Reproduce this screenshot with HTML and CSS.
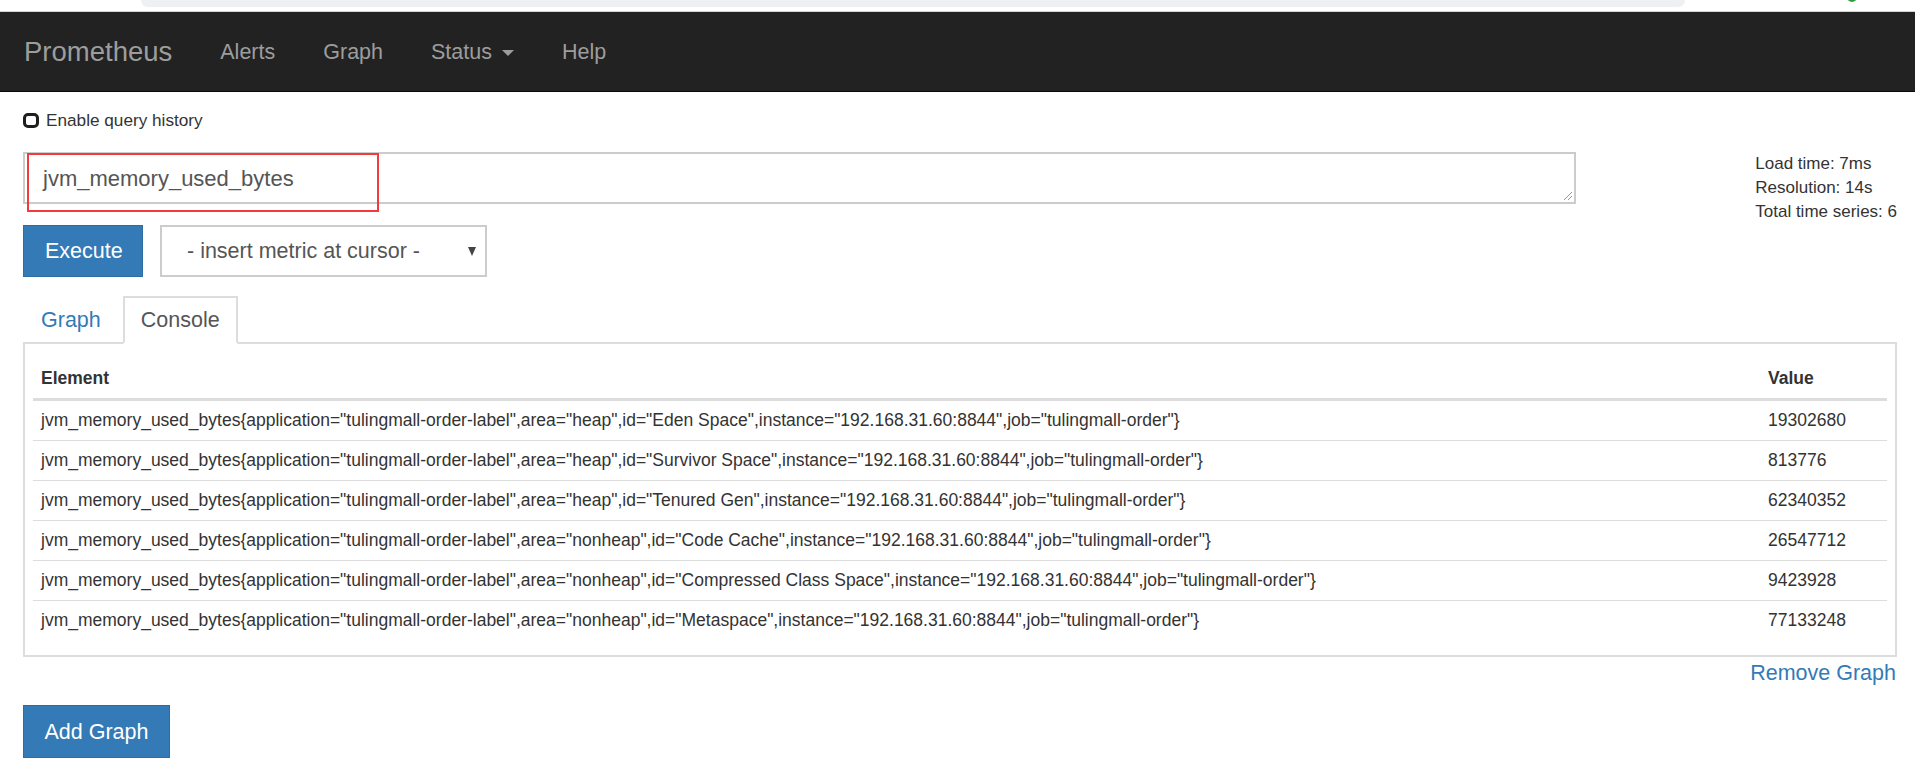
FILE: index.html
```html
<!DOCTYPE html>
<html lang="en">
<head>
<meta charset="utf-8">
<title>Prometheus Time Series Collection and Processing Server</title>
<link rel="stylesheet" href="styles.css">
</head>
<body>
<div class="chrome">
  <div class="chrome-bar"></div>
  <div class="chrome-dot"></div>
</div>
<nav class="navbar">
  <a class="brand" href="#">Prometheus</a>
  <ul class="nav">
    <li><a href="#">Alerts</a></li>
    <li><a href="#">Graph</a></li>
    <li><a href="#">Status <span class="caret"></span></a></li>
    <li><a href="#">Help</a></li>
  </ul>
</nav>
<main class="page">
  <label class="history"><span class="checkbox"></span>Enable query history</label>
  <div class="query-row">
    <div class="query-main">
      <div class="expr">
        <div class="expr-text">jvm_memory_used_bytes</div>
        <svg class="grip" width="12" height="12" viewBox="0 0 12 12"><path d="M11 3 L3 11 M11 7 L7 11" stroke="#999" stroke-width="1" fill="none"/></svg>
        <div class="highlight"></div>
      </div>
      <div class="controls">
        <button class="btn">Execute</button>
        <div class="select">- insert metric at cursor -<span class="arrow"></span></div>
      </div>
    </div>
    <div class="info">
      <div>Load time: 7ms</div>
      <div>Resolution: 14s</div>
      <div>Total time series: 6</div>
    </div>
  </div>
  <ul class="tabs">
    <li class="tab"><a href="#">Graph</a></li>
    <li class="tab active"><a href="#">Console</a></li>
  </ul>
  <div class="panel">
    <table class="results">
      <thead>
        <tr><th>Element</th><th class="value">Value</th></tr>
      </thead>
      <tbody>
        <tr><td>jvm_memory_used_bytes{application="tulingmall-order-label",area="heap",id="Eden Space",instance="192.168.31.60:8844",job="tulingmall-order"}</td><td>19302680</td></tr>
        <tr><td>jvm_memory_used_bytes{application="tulingmall-order-label",area="heap",id="Survivor Space",instance="192.168.31.60:8844",job="tulingmall-order"}</td><td>813776</td></tr>
        <tr><td>jvm_memory_used_bytes{application="tulingmall-order-label",area="heap",id="Tenured Gen",instance="192.168.31.60:8844",job="tulingmall-order"}</td><td>62340352</td></tr>
        <tr><td>jvm_memory_used_bytes{application="tulingmall-order-label",area="nonheap",id="Code Cache",instance="192.168.31.60:8844",job="tulingmall-order"}</td><td>26547712</td></tr>
        <tr><td>jvm_memory_used_bytes{application="tulingmall-order-label",area="nonheap",id="Compressed Class Space",instance="192.168.31.60:8844",job="tulingmall-order"}</td><td>9423928</td></tr>
        <tr><td>jvm_memory_used_bytes{application="tulingmall-order-label",area="nonheap",id="Metaspace",instance="192.168.31.60:8844",job="tulingmall-order"}</td><td>77133248</td></tr>
      </tbody>
    </table>
  </div>
  <div class="remove"><a href="#">Remove Graph</a></div>
  <button class="btn add">Add Graph</button>
</main>
</body>
</html>
```

FILE: styles.css
```css
* { box-sizing: border-box; }
html, body { margin: 0; padding: 0; background: #fff; }
body {
  font-family: "Liberation Sans", Arial, Helvetica, sans-serif;
  color: #333;
  font-size: 17px;
  line-height: 24px;
}
a { text-decoration: none; }

.chrome {
  height: 12px;
  display: flex;
  align-items: flex-start;
  border-bottom: 1px solid #d4d4d4;
  overflow: hidden;
  background: #fff;
}
.chrome-bar {
  margin-left: 141px;
  width: 1544px;
  height: 7px;
  background: #eef0f2;
  border-radius: 0 0 9px 9px;
}
.chrome-dot {
  margin-left: auto;
  margin-right: 58px;
  margin-top: -8px;
  width: 10px;
  height: 10px;
  border-radius: 50%;
  background: #2e9e3e;
}

.navbar {
  height: 80px;
  background: #222;
  border-bottom: 1px solid #080808;
  display: flex;
  align-items: center;
}
.brand {
  color: #9d9d9d;
  font-size: 27.5px;
  padding: 0 24px 0 24px;
  line-height: 30px;
}
.nav {
  list-style: none;
  margin: 0;
  padding: 0;
  display: flex;
}
.nav a {
  display: block;
  color: #9d9d9d;
  font-size: 21.5px;
  line-height: 30px;
  padding: 0 24px;
}
.caret {
  display: inline-block;
  width: 0;
  height: 0;
  margin-left: 4px;
  vertical-align: middle;
  border-top: 6px solid #9d9d9d;
  border-left: 6px solid transparent;
  border-right: 6px solid transparent;
}

.page {
  padding: 0 18px 0 23px;
}

.history {
  display: flex;
  align-items: center;
  margin-top: 16px;
  height: 24px;
  font-size: 17.2px;
  color: #333;
}
.checkbox {
  display: inline-block;
  width: 16px;
  height: 15px;
  margin-left: 0;
  margin-right: 7px;
  border: 3px solid #1e1e1e;
  border-radius: 5px;
}

.query-row {
  display: flex;
  margin-top: 20px;
}
.query-main {
  width: 1553px;
}
.expr {
  position: relative;
  height: 52px;
  border: 2px solid #cccccc;
  background: #fff;
}
.expr-text {
  padding: 11px 18px 0 18px;
  font-size: 22px;
  line-height: 28px;
  color: #555;
}
.grip {
  position: absolute;
  right: 1px;
  bottom: 1px;
}
.highlight {
  position: absolute;
  left: 2px;
  top: -1px;
  width: 352px;
  height: 59px;
  border: 2px solid #f33b3b;
}

.controls {
  display: flex;
  margin-top: 21px;
  gap: 17px;
}
.btn {
  font-family: inherit;
  font-size: 21.5px;
  line-height: 28px;
  color: #fff;
  background: #337ab7;
  border: 1px solid #2e6da4;
  padding: 11px 21px;
  height: 52px;
  width: 120px;
  text-align: center;
  border-radius: 0;
  cursor: pointer;
}
.select {
  width: 327px;
  height: 52px;
  border: 2px solid #cccccc;
  display: flex;
  align-items: center;
  padding-left: 25px;
  padding-right: 9px;
  font-size: 21.5px;
  color: #555;
}
.arrow {
  margin-left: auto;
  width: 0;
  height: 0;
  border-top: 9px solid #444;
  border-left: 4.5px solid transparent;
  border-right: 4.5px solid transparent;
}

.info {
  margin-left: auto;
  font-size: 17px;
  line-height: 24px;
  color: #333;
  white-space: nowrap;
}

.tabs {
  list-style: none;
  margin: 19px 0 0 0;
  padding: 0;
  display: flex;
  border-bottom: 2px solid #ddd;
}
.tab {
  margin-right: 4px;
  margin-bottom: -2px;
  border: 2px solid transparent;
}
.tab a {
  display: block;
  font-size: 21.5px;
  line-height: 44px;
  padding: 0 16px;
  color: #337ab7;
}
.tab.active {
  border-color: #ddd;
  border-bottom-color: #fff;
  background: #fff;
}
.tab.active a {
  color: #555;
}

.panel {
  border: 2px solid #ddd;
  border-top: none;
  padding: 8px 8px 15px 8px;
}
.results {
  width: 100%;
  border-collapse: separate;
  border-spacing: 0;
  font-size: 17.5px;
  color: #333;
}
.results th {
  text-align: left;
  font-weight: bold;
  padding: 14px 8px 8px 8px;
  line-height: 24px;
  border-bottom: 2px solid #ddd;
}
.results th.value {
  width: 127px;
}
.results td {
  padding: 8px;
  line-height: 23px;
  border-top: 1px solid #ddd;
  white-space: nowrap;
}

.remove {
  text-align: right;
  line-height: 32px;
  font-size: 21.5px;
  padding-right: 1px;
}
.remove a { color: #337ab7; }

.add {
  margin-top: 16px;
  width: 147px;
  height: 53px;
  padding: 11px 0;
}
```
